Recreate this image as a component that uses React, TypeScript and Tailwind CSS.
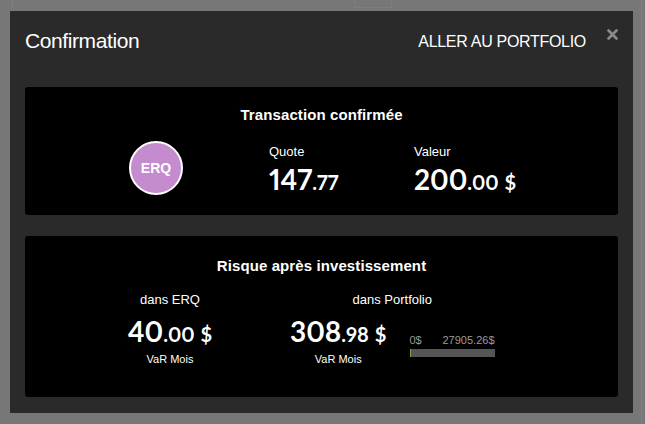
import React from "react";

function Amount({ whole, cents, unit }: { whole: string; cents: string; unit?: string }) {
  return (
    <div className="flex items-baseline font-['Lato',sans-serif] font-bold text-white leading-none [font-variant-numeric:proportional-nums]">
      <span className="text-[28px]">{whole}</span>
      <span className="text-[20px]">.{cents}</span>
      {unit && <span className="ml-[6px] text-[20px]">{unit}</span>}
    </div>
  );
}

export default function App() {
  return (
    <div className="relative h-[424px] w-[645px] overflow-hidden bg-[#777777] font-['Liberation_Sans',Arial,sans-serif]">
      {/* page behind the overlay */}
      <div className="absolute left-[12px] top-0 h-[8px] w-[1px] bg-[#808080]" />
      <div className="absolute left-[354px] top-0 h-[8px] w-[38px] border-x border-b border-[#7e7e7e]" />
      <div className="absolute right-[3px] top-0 h-[424px] w-[1px] bg-[#7f7f7f]" />

      <div className="absolute left-[10px] top-[11px] flex h-[402px] w-[623px] flex-col bg-[#2a2a2a] px-[15px]">
        <div className="flex h-[76px] items-start pt-[17px]">
          <h1 className="text-[21px] leading-[25px] text-white tracking-[-0.4px]">Confirmation</h1>
          <span className="ml-auto mt-[5px] text-[16px] leading-[18px] text-white tracking-[-0.3px]">ALLER AU PORTFOLIO</span>
          <svg className="ml-[21px] mt-[1px]" width="11" height="11" viewBox="0 0 11 11">
            <path d="M1.5 1.5 L9.5 9.5 M9.5 1.5 L1.5 9.5" stroke="#8a8a8a" strokeWidth="2.6" strokeLinecap="round" />
          </svg>
        </div>

        <div className="h-[128px] rounded-[3px] bg-black pt-[19px]">
          <div className="text-center text-[15px] font-bold leading-[18px] text-white tracking-[0.1px]">Transaction confirmée</div>
          <div className="mt-[17px] flex">
            <div className="ml-[104px] flex h-[54px] w-[54px] items-center justify-center rounded-full border-2 border-white bg-[#c48ccf] text-[14px] font-bold text-white">
              ERQ
            </div>
            <div className="ml-[86px] w-[145px] pt-[3px]">
              <div className="text-[13px] leading-[15px] text-white">Quote</div>
              <div className="mt-[6px]"><Amount whole="147" cents="77" /></div>
            </div>
            <div className="pt-[3px]">
              <div className="text-[13px] leading-[15px] text-white">Valeur</div>
              <div className="mt-[6px]"><Amount whole="200" cents="00" unit="$" /></div>
            </div>
          </div>
        </div>

        <div className="mt-[21px] h-[161px] rounded-[3px] bg-black pt-[21px]">
          <div className="text-center text-[15px] font-bold leading-[18px] text-white tracking-[0.1px]">Risque après investissement</div>
          <div className="mt-[17px] flex">
            <div className="ml-[105px] flex w-[80px] flex-col items-center">
              <div className="text-[13px] leading-[15px] text-white">dans ERQ</div>
              <div className="mt-[10px]"><Amount whole="40" cents="00" unit="$" /></div>
              <div className="mt-[8px] text-[11px] leading-[13px] text-white">VaR Mois</div>
            </div>
            <div className="ml-[80px] flex flex-col items-center">
              <div className="text-[13px] leading-[15px] text-white">dans Portfolio</div>
              <div className="mt-[10px] flex items-start">
                <div className="flex flex-col items-center">
                  <Amount whole="308" cents="98" unit="$" />
                  <div className="mt-[8px] text-[11px] leading-[13px] text-white">VaR Mois</div>
                </div>
                <div className="ml-[23px] mt-[17px] w-[85px]">
                  <div className="flex justify-between text-[11px] leading-[13px] text-[#9a9a9a]">
                    <span>0$</span>
                    <span>27905.26$</span>
                  </div>
                  <div className="mt-[2px] h-[8px] bg-[#555555] border-l border-[#8a9a3a]" />
                </div>
              </div>
            </div>
          </div>
        </div>
      </div>
    </div>
  );
}
